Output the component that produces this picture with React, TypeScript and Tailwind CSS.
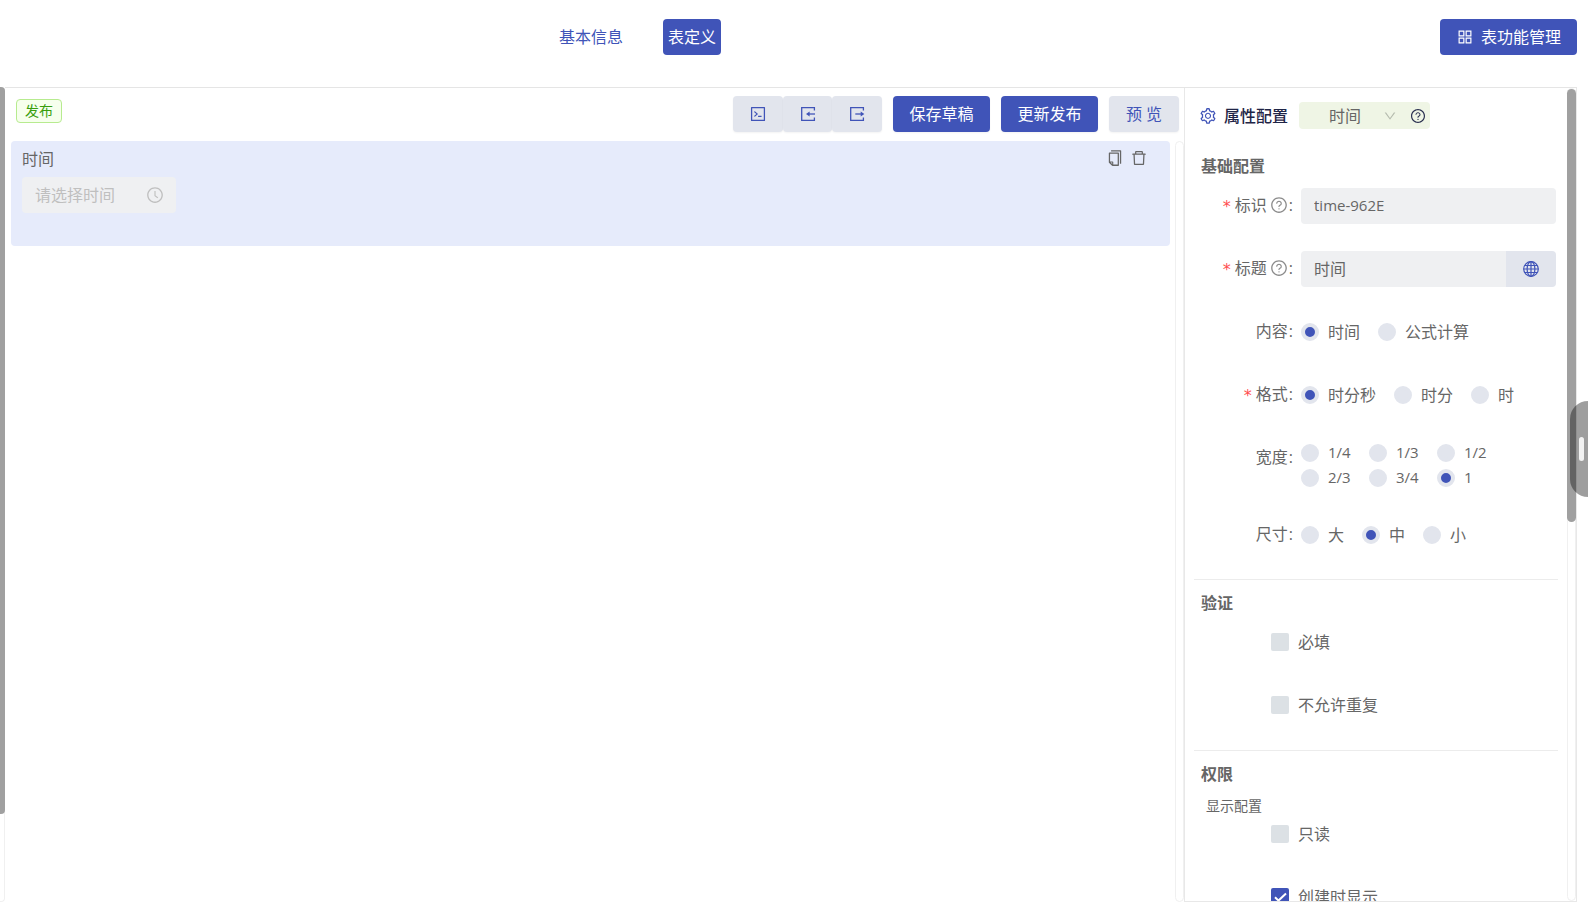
import type { ReactNode } from "react";
import {
  AiOutlineAppstore,
  AiOutlineClockCircle,
  AiOutlineCode,
  AiOutlineCopy,
  AiOutlineDelete,
  AiOutlineDown,
  AiOutlineQuestionCircle,
  AiOutlineSetting,
} from "react-icons/ai";

type FieldRowProps = {
  label: string;
  htmlFor?: string;
  required?: boolean;
  hint?: boolean;
  children: ReactNode;
};

function FieldRow({ label, htmlFor, required, hint, children }: FieldRowProps) {
  return (
    <div className="flex min-h-9 items-center">
      <div className="flex h-[34px] w-[100px] shrink-0 items-center justify-end self-start pr-2">
        {required && <span className="mr-1 pt-1 font-['DejaVu_Sans'] text-base leading-4 text-[#ff4d4f]">*</span>}
        <label htmlFor={htmlFor}>{label}</label>
        {hint && <AiOutlineQuestionCircle className="ml-[3px] h-[18px] w-[18px] text-[#8c8c8c]" />}
        <span className="ml-px">:</span>
      </div>
      {children}
    </div>
  );
}

type RadioProps = { name: string; label: string; checked?: boolean };

function Radio({ name, label, checked }: RadioProps) {
  return (
    <label className="flex items-center gap-[9px] whitespace-nowrap">
      <input
        type="radio"
        name={name}
        defaultChecked={checked}
        className="h-[18px] w-[18px] shrink-0 appearance-none rounded-full border-4 border-[#e2e5ed] bg-[#e2e5ed] checked:bg-[#4054b8]"
      />
      {label}
    </label>
  );
}

function Checkbox({ label, checked }: { label: string; checked?: boolean }) {
  return (
    <div className="mb-[27px] flex h-9 items-center pl-[70px]">
      <label className="flex items-center gap-[9px]">
        <span className="relative flex">
          <input
            type="checkbox"
            defaultChecked={checked}
            className="peer h-[18px] w-[18px] appearance-none rounded-xs bg-[#dce1e5] checked:bg-[#4054b8]"
          />
          <svg
            viewBox="0 0 18 18"
            className="pointer-events-none absolute inset-0 hidden h-[18px] w-[18px] peer-checked:block"
            fill="none"
            stroke="white"
            strokeWidth="2"
            aria-hidden="true"
          >
            <path d="M4 9.2 7.5 12.6 15 5.6" />
          </svg>
        </span>
        {label}
      </label>
    </div>
  );
}

function ImportIcon() {
  return (
    <svg viewBox="0 0 16 16" className="h-4 w-4" aria-hidden="true">
      <path d="M14.4 4.4V1.7H1.7v12.6h12.7v-2.7" fill="none" stroke="currentColor" strokeWidth="1.3" />
      <path d="M15 8H8.5" stroke="currentColor" strokeWidth="1.3" />
      <path d="M6 8l3.6-2.6v5.2z" fill="currentColor" />
    </svg>
  );
}

function ExportIcon() {
  return (
    <svg viewBox="0 0 16 16" className="h-4 w-4" aria-hidden="true">
      <path d="M14.4 4.4V1.7H1.7v12.6h12.7v-2.7" fill="none" stroke="currentColor" strokeWidth="1.3" />
      <path d="M6.3 8h6.5" stroke="currentColor" strokeWidth="1.3" />
      <path d="M15.3 8l-3.6-2.6v5.2z" fill="currentColor" />
    </svg>
  );
}

function GlobeIcon() {
  return (
    <svg viewBox="0 0 16 16" className="h-4 w-4" fill="none" stroke="currentColor" strokeWidth="1.2" aria-hidden="true">
      <circle cx="8" cy="8" r="7.3" />
      <ellipse cx="8" cy="8" rx="3.9" ry="7.3" />
      <path d="M8 .7v14.6M.7 8h14.6M1.8 4.5h12.4M1.8 11.5h12.4" />
    </svg>
  );
}

const iconButton = "flex h-9 flex-1 items-center justify-center rounded bg-[#e2e5ed] text-[#4054b8] shadow-xs";
const primaryButton = "h-9 w-[97px] rounded bg-[#4054b8] text-white shadow-xs";

function Toolbar() {
  return (
    <div className="flex items-start justify-between pt-2 pr-[5px] pb-[9px] pl-[11px]">
      <span className="mt-[3px] flex h-6 items-center rounded border border-[#b7eb8f] bg-[#f6ffed] px-2 text-sm text-[#389e0d]">
        发布
      </span>
      <div className="flex gap-[11px]">
        <div className="flex w-[149px]">
          <button type="button" className={iconButton} aria-label="代码">
            <AiOutlineCode className="h-[18px] w-[18px]" />
          </button>
          <button type="button" className={iconButton} aria-label="导入">
            <ImportIcon />
          </button>
          <button type="button" className={iconButton} aria-label="导出">
            <ExportIcon />
          </button>
        </div>
        <button type="button" className={primaryButton}>保存草稿</button>
        <button type="button" className={primaryButton}>更新发布</button>
        <button type="button" className="h-9 w-[70px] rounded bg-[#e2e5ed] text-[#4054b8] shadow-xs">预 览</button>
      </div>
    </div>
  );
}

function Canvas() {
  return (
    <div className="flex min-h-0 flex-1 pl-1.5">
      <div className="flex-1">
        <section className="flex h-[105px] items-start justify-between rounded bg-[#e6ebfb] pt-1.5 pr-[22px] pl-[11px]">
          <div>
            <label htmlFor="time" className="block leading-6">时间</label>
            <div className="mt-1.5 flex h-9 w-[154px] items-center justify-between rounded bg-[#eff0f2] pr-3 pl-[13px] text-[#bfbfbf]">
              <input
                id="time"
                placeholder="请选择时间"
                className="w-24 bg-transparent outline-none placeholder:text-[#bfbfbf]"
              />
              <AiOutlineClockCircle className="h-[18px] w-[18px]" />
            </div>
          </div>
          <div className="flex gap-1.5 pt-0.5">
            <button type="button" aria-label="复制"><AiOutlineCopy className="h-[18px] w-[18px]" /></button>
            <button type="button" aria-label="删除"><AiOutlineDelete className="h-[18px] w-[18px]" /></button>
          </div>
        </section>
      </div>
      <div className="ml-[5px] w-[9px] rounded-full border border-[#f0f0f0]" />
    </div>
  );
}

function Properties() {
  return (
    <aside className="flex w-[393px] shrink-0 border-x border-b border-x-[#e8e8e8] border-b-[#e8e8e8]">
      <div className="min-w-0 flex-1 overflow-hidden pr-[9px] pl-[9px]">
        <div className="mt-3.5 flex h-[27px] items-center pl-[5px]">
          <AiOutlineSetting className="h-[18px] w-[18px] text-[#4054b8]" />
          <h2 className="ml-[7px] font-medium text-[#1f2547]">属性配置</h2>
          <div className="ml-[11px] flex h-[27px] w-[131px] items-center rounded bg-[#eff5e5] pr-1">
            <div className="relative flex flex-1 items-center">
              <select aria-label="类型" className="w-full appearance-none bg-transparent pl-[30px] outline-none">
                <option>时间</option>
              </select>
              <AiOutlineDown className="pointer-events-none absolute right-[13px] h-3.5 w-3.5 text-[#b5bbae]" />
            </div>
            <AiOutlineQuestionCircle className="h-4 w-4 text-[#2a3050]" />
          </div>
        </div>

        <section className="border-b border-[#ececec] pt-[25px] pr-0.5 pb-[26px] pl-[7px]">
          <h3 className="mb-2.5 leading-6 font-bold">基础配置</h3>
          <div className="flex flex-col gap-[27px]">
            <FieldRow label="标识" htmlFor="field-id" required hint>
              <input
                id="field-id"
                defaultValue="time-962E"
                className="h-9 min-w-0 flex-1 rounded bg-[#eff0f2] px-[13px] pb-0.5 text-[15px] outline-none"
              />
            </FieldRow>
            <FieldRow label="标题" htmlFor="field-title" required hint>
              <div className="flex min-w-0 flex-1">
                <input
                  id="field-title"
                  defaultValue="时间"
                  className="h-9 min-w-0 flex-1 rounded-l bg-[#eff0f2] px-[13px] pb-0.5 outline-none"
                />
                <button
                  type="button"
                  aria-label="多语言"
                  className="flex h-9 w-[50px] items-center justify-center rounded-r bg-[#e2e5ed] text-[#4054b8]"
                >
                  <GlobeIcon />
                </button>
              </div>
            </FieldRow>
            <FieldRow label="内容">
              <div className="flex gap-[18px]">
                <Radio name="content" label="时间" checked />
                <Radio name="content" label="公式计算" />
              </div>
            </FieldRow>
            <FieldRow label="格式" required>
              <div className="flex gap-[18px]">
                <Radio name="format" label="时分秒" checked />
                <Radio name="format" label="时分" />
                <Radio name="format" label="时" />
              </div>
            </FieldRow>
            <FieldRow label="宽度">
              <div className="grid grid-cols-[repeat(3,68px)] text-[15px] leading-[25px]">
                <Radio name="width" label="1/4" />
                <Radio name="width" label="1/3" />
                <Radio name="width" label="1/2" />
                <Radio name="width" label="2/3" />
                <Radio name="width" label="3/4" />
                <Radio name="width" label="1" checked />
              </div>
            </FieldRow>
            <FieldRow label="尺寸">
              <div className="flex gap-[18px]">
                <Radio name="size" label="大" />
                <Radio name="size" label="中" checked />
                <Radio name="size" label="小" />
              </div>
            </FieldRow>
          </div>
        </section>

        <section className="border-b border-[#ececec] pt-[11px] pl-[7px]">
          <h3 className="mb-[9px] leading-6 font-bold">验证</h3>
          <Checkbox label="必填" />
          <Checkbox label="不允许重复" />
        </section>

        <section className="pt-[11px] pl-[7px]">
          <h3 className="mb-[9px] leading-6 font-bold">权限</h3>
          <h4 className="pl-[5px] text-sm leading-[21px]">显示配置</h4>
          <Checkbox label="只读" />
          <Checkbox label="创建时显示" checked />
        </section>
      </div>
      <div className="w-[9px] shrink-0 rounded-full border border-[#f0f0f0]">
        <div className="-mx-px h-8/15 rounded-full bg-[#a0a0a0]" />
      </div>
    </aside>
  );
}

export default function App() {
  return (
    <div className="relative flex h-screen flex-col overflow-hidden bg-white pb-4 font-['Open_Sans','Noto_Sans_CJK_SC',sans-serif] text-base text-[#666666]">
      <header className="flex h-[87px] shrink-0 items-start justify-between pt-[19px] pr-[11px]">
        <nav className="ml-[35%] flex gap-9 pl-[3px]">
          <a href="#info" className="flex h-9 items-center px-1 text-[#4054b8]">基本信息</a>
          <a href="#table" className="flex h-9 items-center rounded bg-[#4054b8] px-[5px] text-white">表定义</a>
        </nav>
        <button type="button" className="flex h-9 items-center gap-[7px] rounded bg-[#4054b8] px-4 text-white">
          <AiOutlineAppstore className="h-[18px] w-[18px]" />
          表功能管理
        </button>
      </header>

      <div className="flex min-h-0 flex-1 pr-[11px]">
        <div className="w-[5px] shrink-0 rounded-r border-r border-b border-[#f0f0f0]">
          <div className="-mr-px h-[727px] rounded-r bg-[#a0a0a0]" />
        </div>
        <main className="flex min-w-0 flex-1 border-t border-[#e5e5e5]">
          <div className="flex min-w-0 flex-1 flex-col">
            <Toolbar />
            <Canvas />
          </div>
          <Properties />
        </main>
      </div>

      <button
        type="button"
        aria-label="收起"
        className="absolute top-[401px] right-0 flex h-24 w-[18px] items-center justify-center rounded-l-full bg-black/38"
      >
        <span className="ml-1 h-6 w-[5px] rounded-full bg-[#f2f2f2]" />
      </button>
    </div>
  );
}
